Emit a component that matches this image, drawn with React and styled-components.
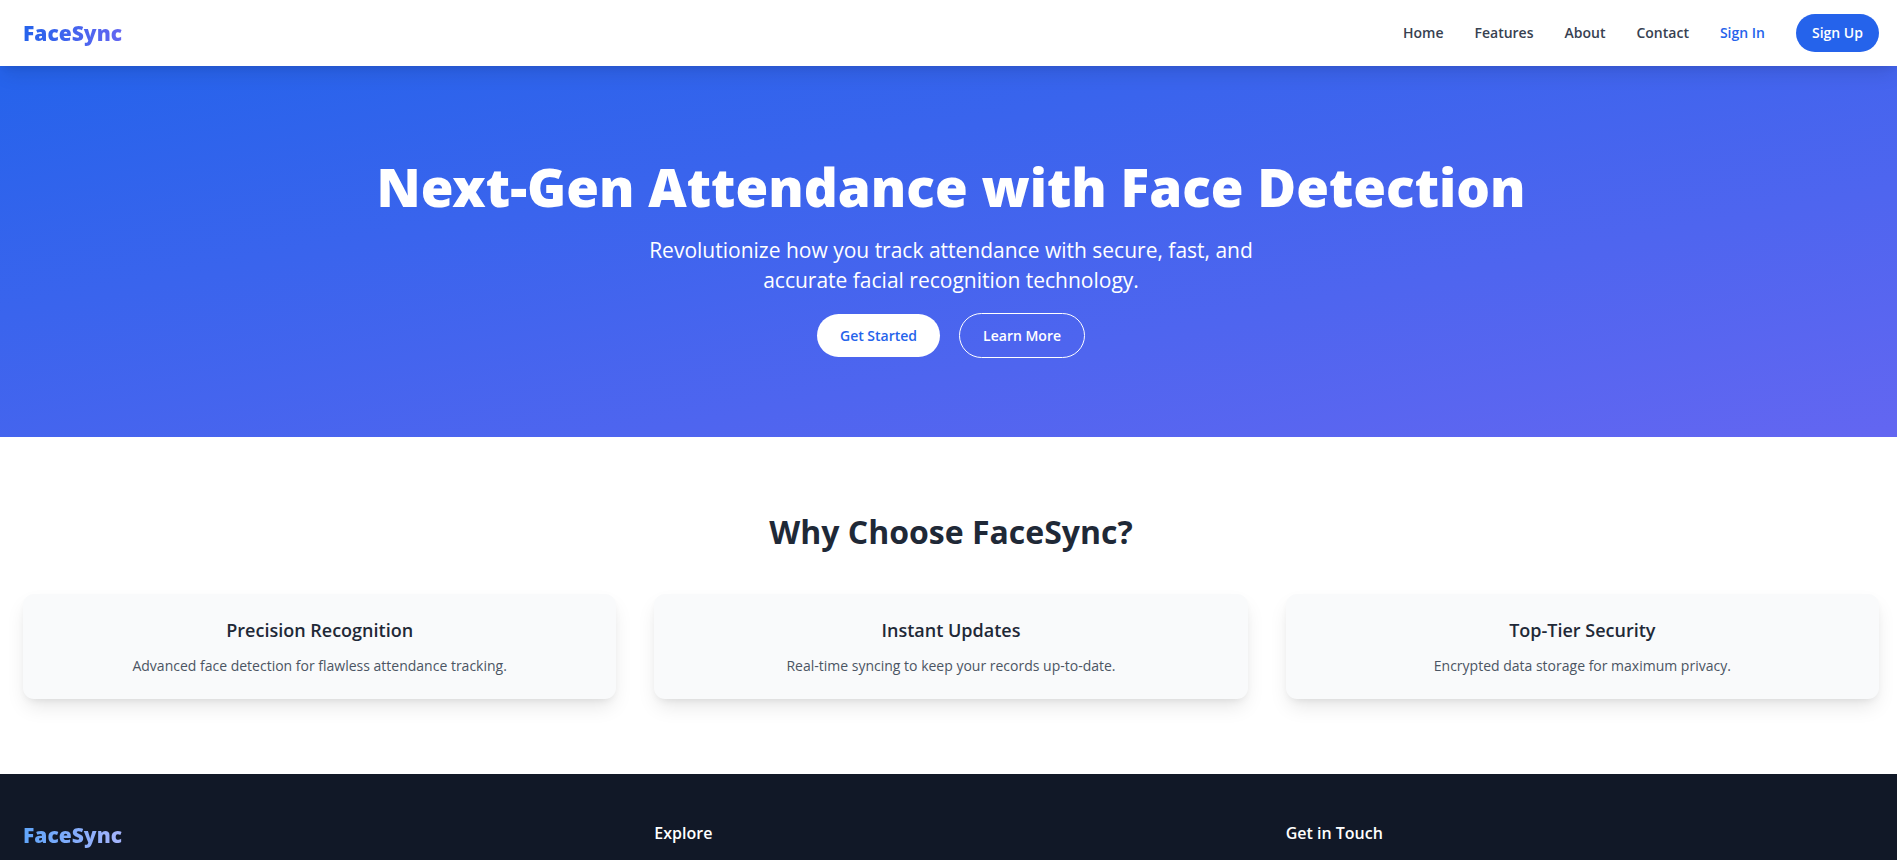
import React from 'react';
import styled, { createGlobalStyle, css } from 'styled-components';

const GlobalStyle = createGlobalStyle`
  *, *::before, *::after { box-sizing: border-box; }
  html, body { margin: 0; padding: 0; }
  body {
    background: #fff;
    color: #1f2937;
    font-family: "Segoe UI", "Open Sans", "Noto Sans", sans-serif;
    font-size: 14px;
    line-height: 22px;
  }
  h1, h2, h3, p { margin: 0; }
  a { text-decoration: none; }
`;

const Page = styled.div`
  min-height: 100vh;
  display: flex;
  flex-direction: column;
`;

const gutter = css`
  padding-left: 23px;
  padding-right: 18px;
`;

const raised = css`
  box-shadow: 0 10px 20px -3px rgba(0, 0, 0, 0.1), 0 4px 8px -4px rgba(0, 0, 0, 0.1);
`;

const Header = styled.header`
  ${gutter}
  ${raised}
  position: relative;
  z-index: 1;
  display: flex;
  align-items: center;
  justify-content: space-between;
  height: 66px;
  background: #fff;
`;

const Logo = styled.a`
  display: inline-block;
  font-family: "Segoe UI", "Noto Sans", sans-serif;
  font-size: 21px;
  line-height: 30px;
  font-weight: 900;
  color: transparent;
  background: linear-gradient(to right, ${(p) => p.$from}, ${(p) => p.$to});
  background-clip: text;
  -webkit-background-clip: text;
`;

const Nav = styled.nav`
  display: flex;
  align-items: center;
  gap: 31px;
`;

const NavLink = styled.a`
  color: ${(p) => (p.$accent ? '#2563eb' : '#374151')};
  font-weight: 600;
`;

const SignUp = styled.button`
  height: 38px;
  padding: 0 16px;
  border: 0;
  border-radius: 19px;
  background: #2563eb;
  color: #fff;
  font: inherit;
  font-weight: 600;
  cursor: pointer;
`;

const Hero = styled.section`
  ${gutter}
  padding-top: 89px;
  padding-bottom: 79px;
  display: flex;
  flex-direction: column;
  align-items: center;
  text-align: center;
  color: #fff;
  background: linear-gradient(to bottom right, #2563eb, #6366f1);
`;

const HeroTitle = styled.h1`
  font-family: "Segoe UI", "Noto Sans", sans-serif;
  font-size: 53px;
  line-height: 64px;
  font-weight: 900;
`;

const HeroText = styled.p`
  max-width: 632px;
  margin-top: 16px;
  font-size: 21px;
  line-height: 30px;
`;

const Actions = styled.div`
  display: flex;
  align-items: center;
  gap: 19px;
  margin-top: 18px;
`;

const ActionButton = styled.button`
  height: ${(p) => (p.$outline ? '45px' : '43px')};
  padding: 0 23px;
  border: ${(p) => (p.$outline ? '1px solid #fff' : '0')};
  border-radius: 23px;
  background: ${(p) => (p.$outline ? 'transparent' : '#fff')};
  color: ${(p) => (p.$outline ? '#fff' : '#2563eb')};
  font: inherit;
  font-weight: 600;
  cursor: pointer;
`;

const Features = styled.section`
  ${gutter}
  padding-top: 75px;
  padding-bottom: 75px;
`;

const SectionTitle = styled.h2`
  margin-bottom: 42px;
  font-size: 32px;
  line-height: 40px;
  font-weight: 700;
  text-align: center;
`;

const Columns = styled.div`
  display: grid;
  grid-template-columns: repeat(3, minmax(0, 1fr));
  gap: 38px;
`;

const Card = styled.article`
  ${raised}
  padding: 23px 23px 22px;
  border-radius: 11px;
  background: #f9fafb;
  text-align: center;
`;

const CardTitle = styled.h3`
  margin-bottom: 12px;
  font-size: 18px;
  line-height: 26px;
  font-weight: 600;
`;

const CardText = styled.p`
  color: #4b5563;
`;

const Footer = styled.footer`
  ${gutter}
  flex: 1;
  padding-top: 46px;
  background: #111827;
  color: #fff;
`;

const FooterTitle = styled.h3`
  font-size: 16px;
  line-height: 26px;
  font-weight: 600;
`;

const links = ['Home', 'Features', 'About', 'Contact'];

const features = [
  { title: 'Precision Recognition', text: 'Advanced face detection for flawless attendance tracking.' },
  { title: 'Instant Updates', text: 'Real-time syncing to keep your records up-to-date.' },
  { title: 'Top-Tier Security', text: 'Encrypted data storage for maximum privacy.' },
];

export default function App() {
  return (
    <Page>
      <GlobalStyle />
      <Header>
        <Logo href="#home" $from="#2563eb" $to="#6366f1">FaceSync</Logo>
        <Nav aria-label="Main">
          {links.map((label) => (
            <NavLink key={label} href={`#${label.toLowerCase()}`}>{label}</NavLink>
          ))}
          <NavLink href="#signin" $accent>Sign In</NavLink>
          <SignUp type="button">Sign Up</SignUp>
        </Nav>
      </Header>
      <main>
        <Hero id="home">
          <HeroTitle>Next-Gen Attendance with Face Detection</HeroTitle>
          <HeroText>
            Revolutionize how you track attendance with secure, fast, and accurate facial recognition technology.
          </HeroText>
          <Actions>
            <ActionButton type="button">Get Started</ActionButton>
            <ActionButton type="button" $outline>Learn More</ActionButton>
          </Actions>
        </Hero>
        <Features id="features">
          <SectionTitle>Why Choose FaceSync?</SectionTitle>
          <Columns>
            {features.map(({ title, text }) => (
              <Card key={title}>
                <CardTitle>{title}</CardTitle>
                <CardText>{text}</CardText>
              </Card>
            ))}
          </Columns>
        </Features>
      </main>
      <Footer>
        <Columns>
          <div>
            <Logo href="#home" $from="#60a5fa" $to="#a5b4fc">FaceSync</Logo>
          </div>
          <FooterTitle>Explore</FooterTitle>
          <FooterTitle>Get in Touch</FooterTitle>
        </Columns>
      </Footer>
    </Page>
  );
}
